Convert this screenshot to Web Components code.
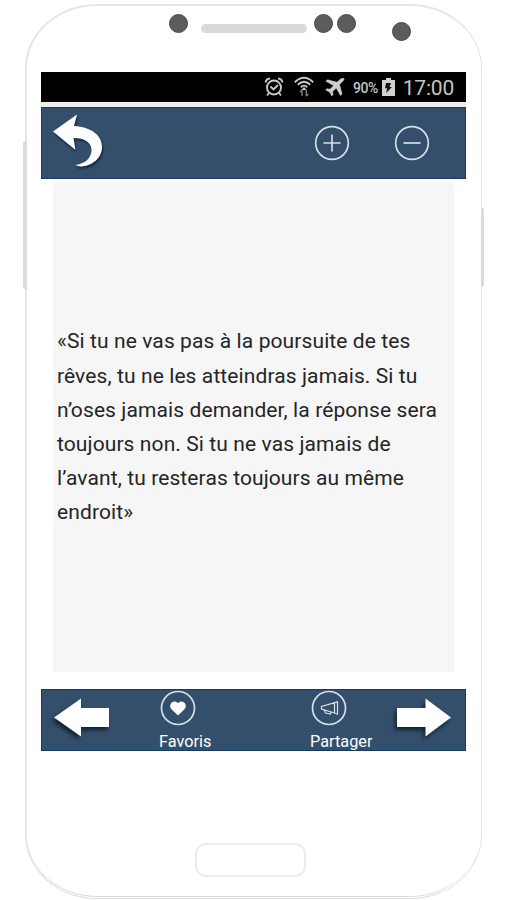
<!DOCTYPE html>
<html lang="fr">
<head>
<meta charset="utf-8">
<title>Citations</title>
<style>
  body { margin: 0; width: 506px; height: 900px; overflow: hidden; background: #fff; font-family: Roboto, sans-serif; }
</style>
</head>
<body>
<phone-frame>
  <status-bar battery="90%" time="17:00"></status-bar>
  <app-header></app-header>
  <quote-card>«Si tu ne vas pas à la poursuite de tes<br>rêves, tu ne les atteindras jamais. Si tu<br>n’oses jamais demander, la réponse sera<br>toujours non. Si tu ne vas jamais de<br>l’avant, tu resteras toujours au même<br>endroit»</quote-card>
  <app-footer></app-footer>
</phone-frame>
<script>
"use strict";

class PhoneFrame extends HTMLElement {
  constructor() {
    super();
    this.attachShadow({ mode: "open" }).innerHTML = `
      <style>
        :host {
          display: block;
          position: relative;
          box-sizing: border-box;
          width: 457px;
          height: 895px;
          margin: 4px 0 0 25px;
          border: 2px solid #e6e6e6;
          border-right-width: 1px;
          border-bottom: 3px double #dcdcdc;
          border-radius: 72px / 64px;
        }
        .sensors { display: flex; align-items: flex-start; height: 66px; }
        .dot { flex: none; width: 17px; height: 17px; margin-top: 8px; border-radius: 50%; background: #5c5c5c; border: 1px solid #484848; }
        .dot.first { margin-left: 142px; }
        .dot.pair { margin-left: 7px; }
        .dot.next { margin-left: 4px; }
        .dot.low { margin: 16px 0 0 36px; }
        .speaker { width: 106px; height: 9px; margin: 18px 0 0 13px; border-radius: 5px; background: #dadada; }
        .screen { width: 425px; margin-left: 14px; }
        .home { box-sizing: border-box; width: 111px; height: 34px; margin: 92px 0 0 168px; border: 2px solid #ececec; border-radius: 11px; }
        .key { position: absolute; background: #dcdcdc; }
        .volume { left: -4px; top: 135px; width: 4px; height: 148px; border-radius: 2px 0 0 2px; }
        .power { right: -3px; top: 202px; width: 3px; height: 79px; border-radius: 0 2px 2px 0; }
      </style>
      <div class="sensors">
        <i class="dot first"></i><i class="speaker"></i><i class="dot pair"></i><i class="dot next"></i><i class="dot low"></i>
      </div>
      <div class="screen"><slot></slot></div>
      <div class="home"></div>
      <i class="key volume"></i>
      <i class="key power"></i>
    `;
  }
}

class StatusBar extends HTMLElement {
  connectedCallback() {
    this.attachShadow({ mode: "open" }).innerHTML = `
      <style>
        :host { display: flex; justify-content: flex-end; align-items: center; box-sizing: border-box; height: 35px; padding-right: 12px; background: #000; border-bottom: 5px solid #eeefea; color: #c4c4c4; }
        svg { flex: none; display: block; fill: none; stroke: #c8c8c8; }
        .level { margin-left: 8px; padding-top: 2px; font-size: 14px; font-weight: 500; letter-spacing: -0.5px; }
        .time { margin-left: 8px; padding-top: 1px; font-size: 21px; line-height: 30px; letter-spacing: -0.2px; }
      </style>
      <svg width="20" height="20" viewBox="0 0 20 20" stroke-width="1.9">
        <circle cx="10" cy="10.5" r="7"/>
        <path d="M1.500 5.500Q2 2 6 1.500M18.500 5.500Q18 2 14 1.500M5 16l-2 2.500M15 16l2 2.500M6.500 9.500l3 3 4.500-4.500"/>
      </svg>
      <svg style="margin-left:10px" width="20" height="22" viewBox="0 0 20 22" stroke-width="1.9">
        <path d="M.8 6.200Q10-2.800 19.200 6.200M3.800 8.800Q10 2.800 16.200 8.800M6.800 11.300Q10 8 13.200 11.300"/>
        <path d="M10 11l2.500 3H7.500z" fill="#c8c8c8" stroke="none"/>
        <path d="M8 20v-6M6 16l2-2.300M12.300 14v6M14.300 18l-2 2.300" stroke="#777" stroke-width="1.500"/>
      </svg>
      <svg style="margin-left:11px" width="20" height="18" viewBox="0 0 20 18">
        <path d="M18.700.6c-1.300-1-3 .3-4.200 1.400L12 4.300 2.500 1.800 1 3.300l7.700 4.200-3.600 3.700-3.200-.4L.7 12l4 2 2.100 3.900 1.200-1.200-.4-3.200 3.700-3.500 4.200 7.500 1.500-1.500-2.500-9.400 2.400-2.500C18 3 19.700 1.700 18.700.6z" fill="#cfcfcf" stroke="#cfcfcf" stroke-width=".6"/>
      </svg>
      <span class="level">${this.getAttribute("battery")}</span>
      <svg style="margin-left:4px" width="13" height="18" viewBox="0 0 13 18">
        <path d="M0 2h4V0h5v2h4v16H0z" fill="#d0d0d0" stroke="none"/>
        <path d="M4 5h5L7.500 9H10l-6 6 1.300-4.800H3z" fill="#111" stroke="none"/>
      </svg>
      <span class="time">${this.getAttribute("time")}</span>
    `;
  }
}

class AppHeader extends HTMLElement {
  constructor() {
    super();
    this.attachShadow({ mode: "open" }).innerHTML = `
      <style>
        :host { display: flex; align-items: center; box-sizing: border-box; height: 72px; padding: 0 35px 0 10px; background: #334f6b; border: 1px solid #123c62; }
        svg { display: block; fill: none; stroke: #d5dfe8; }
        .back { margin: -4px auto 0 0; filter: drop-shadow(1px 2px 1px #10263c); }
        .zoom { margin-left: 44px; }
      </style>
      <svg class="back" width="54" height="56" viewBox="0 0 54 56">
        <path d="M1 18.500L25 1.500l-3 11.500c17 1 28 9 28 21 0 11-10 19.500-22 19.500l-5-1.500c10-1 16.500-7 16.500-15 0-7.500-7-12-18-12l2 12z" fill="#fff" stroke="none"/>
      </svg>
      <svg class="zoom" width="36" height="36" viewBox="0 0 36 36" stroke-width="1.700">
        <circle cx="18" cy="18" r="16.300"/><path d="M9.500 18h17M18 9.500v17"/>
      </svg>
      <svg class="zoom" width="36" height="36" viewBox="0 0 36 36" stroke-width="1.700">
        <circle cx="18" cy="18" r="16.300"/><path d="M9.500 18h17"/>
      </svg>
    `;
  }
}

class QuoteCard extends HTMLElement {
  constructor() {
    super();
    this.attachShadow({ mode: "open" }).innerHTML = `
      <style>
        :host { display: flex; align-items: center; box-sizing: border-box; width: 401px; height: 490px; margin: 3px 0 17px 12px; padding-left: 4px; background: #f6f6f6; color: #252525; }
        p { margin: 0; font-size: 21px; line-height: 34.200px; letter-spacing: 0.100px; white-space: nowrap; }
      </style>
      <p><slot></slot></p>
    `;
  }
}

class AppFooter extends HTMLElement {
  constructor() {
    super();
    this.attachShadow({ mode: "open" }).innerHTML = `
      <style>
        :host { display: flex; align-items: flex-start; box-sizing: border-box; height: 62px; background: #334f6b; border: 1px solid #123c62; color: #fff; }
        svg { display: block; }
        .arrow { flex: none; margin-top: 8px; filter: drop-shadow(-2px 3px 2px #0d2033); }
        .prev { margin-left: 12px; }
        .next { margin-left: 21px; }
        .action { flex: none; font-size: 16.300px; line-height: 18px; white-space: nowrap; }
        .action svg { margin-bottom: 7px; }
        .fav { width: 54px; margin-left: 49px; }
        .share { width: 65px; margin-left: 97px; }
      </style>
      <svg class="arrow prev" width="56" height="40" viewBox="0 0 56 40">
        <path d="M0 19.500L27 .5V10h28v19H27v9.500z" fill="#fff"/>
      </svg>
      <div class="action fav">
        <svg width="38" height="36" viewBox="0 0 38 36">
          <circle cx="19" cy="18" r="16.500" fill="none" stroke="#d5dfe8" stroke-width="1.700"/>
          <path d="M19 25.500l-6.500-6.200C8.500 15 14.500 8.500 19 13.300 23.500 8.500 29.500 15 25.500 19.300z" fill="#fff"/>
        </svg>
        Favoris
      </div>
      <div class="action share">
        <svg width="38" height="36" viewBox="0 0 38 36" fill="none" stroke="#d5dfe8">
          <circle cx="19" cy="18" r="16.500" stroke-width="1.700"/>
          <path d="M27.500 11.800v12.400L23 22.500 11.500 19v-2.500zM24.500 13v9.500M14 20l1.500 3 5 1 .5-2.500" stroke-width="1.200"/>
        </svg>
        Partager
      </div>
      <svg class="arrow next" width="56" height="40" viewBox="0 0 56 40">
        <path d="M55 19.500L29.500.5V10H1v19h28.500v9.500z" fill="#fff"/>
      </svg>
    `;
  }
}

customElements.define("phone-frame", PhoneFrame);
customElements.define("status-bar", StatusBar);
customElements.define("app-header", AppHeader);
customElements.define("quote-card", QuoteCard);
customElements.define("app-footer", AppFooter);
</script>
</body>
</html>
